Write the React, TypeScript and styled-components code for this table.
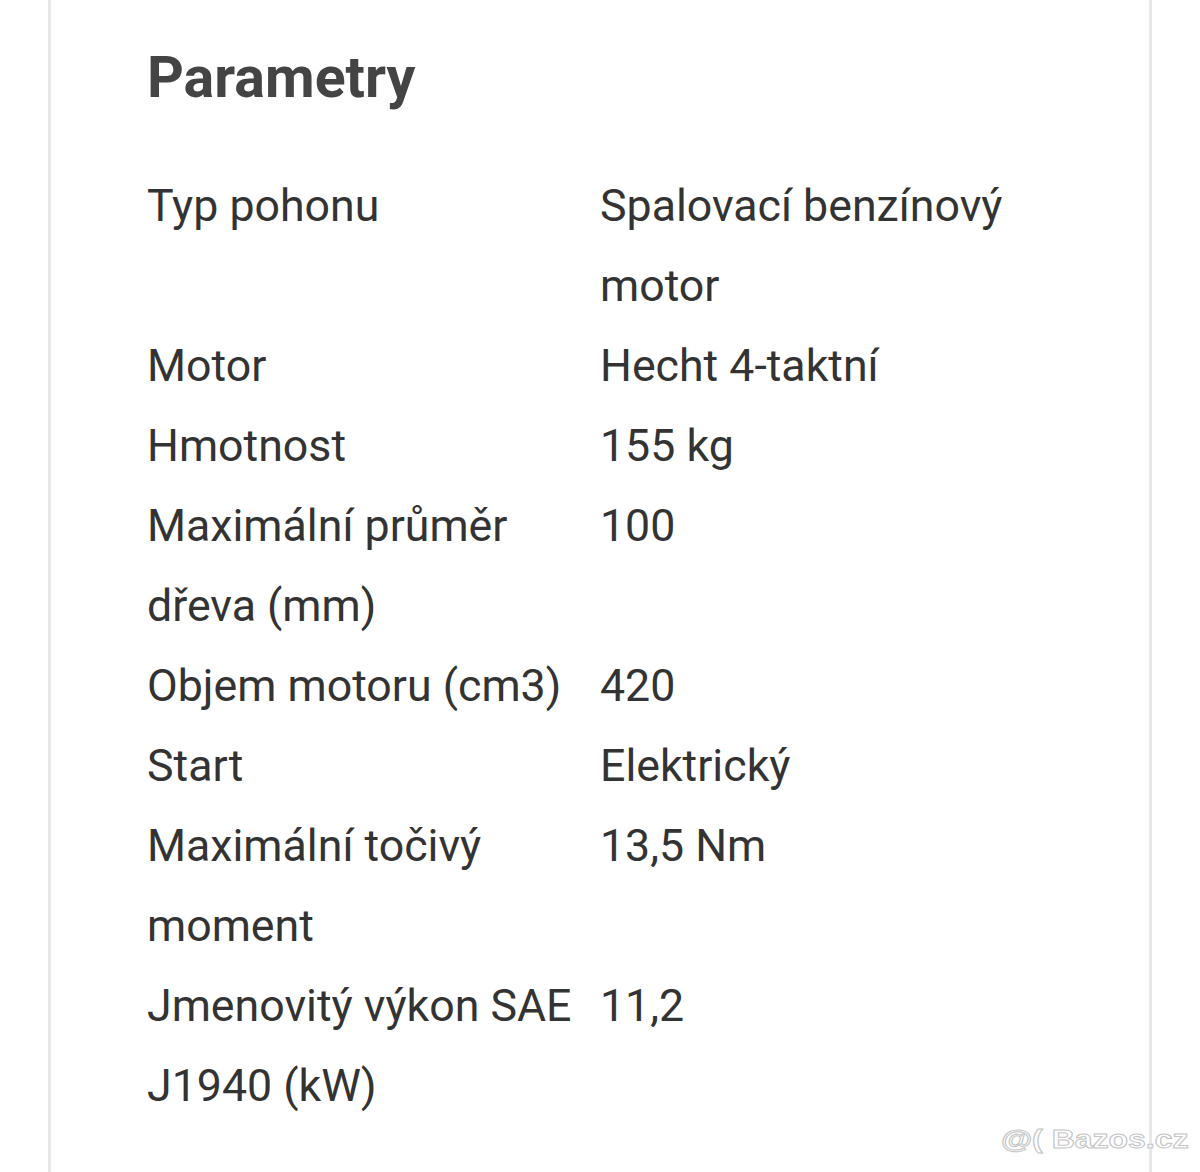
import React from "react";
import styled, { createGlobalStyle } from "styled-components";

const Global = createGlobalStyle`
  html, body {
    margin: 0;
    padding: 0;
    background: #ffffff;
    font-family: Roboto, "Noto Sans", sans-serif;
  }
  #root { min-height: 1172px; }
`;

const Page = styled.div`
  position: relative;
  min-height: 1172px;
  overflow: hidden;
`;

const Card = styled.section`
  margin: 0 48px;
  min-height: 1172px;
  box-sizing: border-box;
  border-left: 3px solid #e8e8e8;
  border-right: 3px solid #e8e8e8;
  padding: 44px 96px 0;
  background: #fff;
`;

const Title = styled.h2`
  margin: 0 0 55px;
  font-family: Roboto, sans-serif;
  font-weight: 700;
  font-size: 57.3px;
  line-height: 67px;
  color: #444444;
`;

const Table = styled.div`
  display: grid;
  grid-template-columns: 453px 453px;
  font-family: Roboto, sans-serif;
  font-size: 44.7px;
  line-height: 80px;
  color: #333333;
`;

const Cell = styled.div`
  padding-right: 8px;
`;

const Watermark = styled.div`
  position: absolute;
  right: 12px;
  bottom: 18px;
  font-family: "Liberation Sans", Arial, sans-serif;
  font-weight: 700;
  font-size: 26px;
  line-height: 30px;
  white-space: nowrap;
  color: rgba(255, 255, 255, 0.6);
  -webkit-text-stroke: 1px #c4c4c4;
  transform: scaleX(1.23);
  transform-origin: right center;
`;

const rows: [string, string][] = [
  ["Typ pohonu", "Spalovací benzínový motor"],
  ["Motor", "Hecht 4-taktní"],
  ["Hmotnost", "155 kg"],
  ["Maximální průměr dřeva (mm)", "100"],
  ["Objem motoru (cm3)", "420"],
  ["Start", "Elektrický"],
  ["Maximální točivý moment", "13,5 Nm"],
  ["Jmenovitý výkon SAE J1940 (kW)", "11,2"],
];

export default function App() {
  return (
    <Page>
      <Global />
      <Card>
        <Title>Parametry</Title>
        <Table>
          {rows.map(([k, v]) => (
            <React.Fragment key={k}>
              <Cell>{k}</Cell>
              <Cell>{v}</Cell>
            </React.Fragment>
          ))}
        </Table>
      </Card>
      <Watermark>@( Bazos.cz</Watermark>
    </Page>
  );
}
